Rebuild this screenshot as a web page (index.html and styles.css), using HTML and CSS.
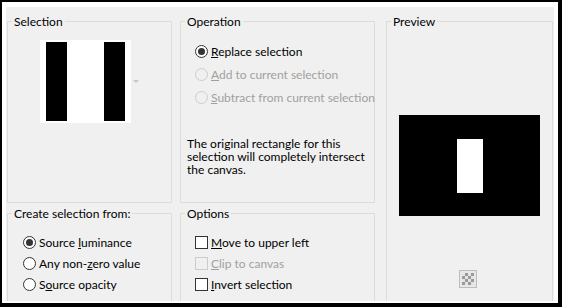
FILE: index.html
```html
<!DOCTYPE html>
<html lang="en">
<head>
  <meta charset="UTF-8" />
  <meta name="viewport" content="width=device-width, initial-scale=1.0">
  <title>Selection from mask</title>

  <link rel="stylesheet" href="styles.css">
</head>

<body>

  <div class="window">
    <div class="panel">

      <fieldset class="group sel">
        <legend>Selection</legend>
        <div class="thumb-row">
          <div class="thumb">
            <span class="bar"></span>
            <span class="bar"></span>
          </div>
          <span class="drop-arrow"></span>
        </div>
      </fieldset>

      <fieldset class="group op">
        <legend>Operation</legend>
        <div class="choices tall">
          <label class="choice"><input type="radio" name="op" checked><span><u>R</u>eplace selection</span></label>
          <label class="choice off"><input type="radio" name="op" disabled><span><u>A</u>dd to current selection</span></label>
          <label class="choice off"><input type="radio" name="op" disabled><span><u>S</u>ubtract from current selection</span></label>
        </div>
        <p class="note">The original rectangle for this selection will completely intersect the canvas.</p>
      </fieldset>

      <fieldset class="group preview">
        <legend>Preview</legend>
        <div class="canvas">
          <div class="canvas-sel"></div>
        </div>
        <span class="checker"></span>
      </fieldset>

      <fieldset class="group create">
        <legend>Create selection from:</legend>
        <div class="choices">
          <label class="choice"><input type="radio" name="src" checked><span>Source <u>l</u>uminance</span></label>
          <label class="choice"><input type="radio" name="src"><span>Any non-<u>z</u>ero value</span></label>
          <label class="choice"><input type="radio" name="src"><span>S<u>o</u>urce opacity</span></label>
        </div>
      </fieldset>

      <fieldset class="group options">
        <legend>Options</legend>
        <div class="choices">
          <label class="choice"><input type="checkbox"><span><u>M</u>ove to upper left</span></label>
          <label class="choice off"><input type="checkbox" disabled><span><u>C</u>lip to canvas</span></label>
          <label class="choice"><input type="checkbox"><span><u>I</u>nvert selection</span></label>
        </div>
      </fieldset>

    </div>
  </div>

</body>
</html>
```

FILE: styles.css
```css
body {
  margin: 0;
  padding: 0;
  background-color: white;
  font-family: Lato, "Noto Sans", sans-serif;
  font-size: 12px;
  color: #000;
}

.window {
  width: 548px;
  border-style: solid;
  border-color: black;
  border-width: 2px 4px 4px 2px;
  padding: 5px 4px 2px 4px;
  background-color: white;
}

.panel {
  height: 280px;
  padding: 7px 1px;
  background-color: #f0f0f0;
  overflow: hidden;
  display: grid;
  grid-template-columns: 165px 195px 170px;
  grid-template-rows: 189px 100px;
  column-gap: 8px;
  row-gap: 3px;
}

.group {
  margin: 0;
  padding: 0;
  min-width: 0;
  border: 1px solid #dcdcdc;
}

.group legend {
  margin-left: 4px;
  padding: 0 2px;
  line-height: 15px;
}

/* selection thumbnail */
.thumb-row {
  display: flex;
  align-items: center;
  gap: 2px;
  margin: 11px 0 0 32px;
}

.thumb {
  display: flex;
  justify-content: space-between;
  width: 79px;
  height: 79px;
  padding: 2px 6px;
  background-color: white;
}

.bar {
  width: 21px;
  background-color: black;
}

.drop-arrow {
  border-left: 3px solid transparent;
  border-right: 3px solid transparent;
  border-top: 3px solid #c8c8c8;
}

/* radio and check lists */
.choices {
  display: flex;
  flex-direction: column;
  margin-top: 11px;
  padding-left: 14px;
}

.create .choices {
  padding-left: 15px;
}

.choice {
  display: flex;
  align-items: center;
  gap: 3px;
  height: 21px;
  white-space: nowrap;
}

.choices.tall .choice {
  height: 23px;
}

.choice.off {
  color: #a0a0a0;
}

.choice input {
  appearance: none;
  margin: 0;
  width: 13px;
  height: 13px;
  border: 1px solid #333;
  background-color: white;
  flex: none;
}

.choice input[type="radio"] {
  border-radius: 50%;
  display: grid;
  place-items: center;
}

.choice input[type="radio"]:checked::before {
  content: "";
  width: 7px;
  height: 7px;
  border-radius: 50%;
  background-color: #333;
}

.choice input:disabled {
  border-color: #cccccc;
  background-color: #f0f0f0;
}

.note {
  width: 182px;
  margin: 28px 0 0 6px;
  line-height: 13px;
}

/* preview */
.preview {
  grid-column: 3;
  grid-row: 1 / 3;
  margin-left: 3px;
  height: 300px;
  display: flex;
  flex-direction: column;
  align-items: center;
}

.canvas {
  width: 141px;
  height: 101px;
  margin-top: 86px;
  background-color: black;
}

.canvas-sel {
  width: 26px;
  height: 54px;
  margin: 24px 0 0 58px;
  background-color: white;
}

.checker {
  width: 12px;
  height: 12px;
  margin: 54px 4px 0 0;
  padding: 2px;
  border: 1px solid #bdbdbd;
  background: repeating-conic-gradient(#9a9a9a 0 25%, #e4e4e4 0 50%) 0 0 / 6px 6px content-box, #e8e8e8;
}
```
